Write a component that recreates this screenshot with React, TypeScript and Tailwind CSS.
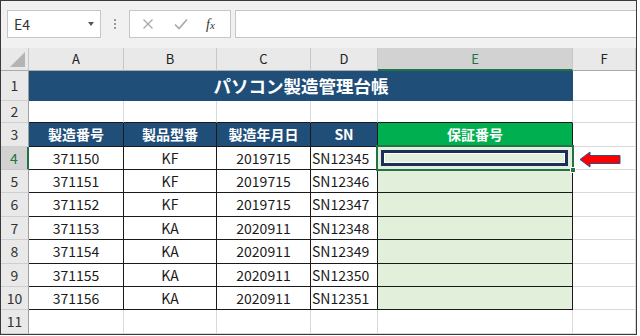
const jp = "font-['Noto_Sans_CJK_JP','Noto_Sans',sans-serif]";

const cols = ["A", "B", "C", "D", "E", "F"];

const rows = [
  ["371150", "KF", "2019715", "SN12345"],
  ["371151", "KF", "2019715", "SN12346"],
  ["371152", "KF", "2019715", "SN12347"],
  ["371153", "KA", "2020911", "SN12348"],
  ["371154", "KA", "2020911", "SN12349"],
  ["371155", "KA", "2020911", "SN12350"],
  ["371156", "KA", "2020911", "SN12351"],
];

function RowHead({ n, active }: { n: number; active?: boolean }) {
  return (
    <div
      className={
        active
          ? "flex items-center justify-center border-b border-r-2 border-b-[#c8c8c8] border-r-[#217346] bg-[#d2d2d2] text-[14px] text-[#217346]"
          : "flex items-center justify-center border-b border-r border-b-[#cfcfcf] border-r-[#9e9e9e] bg-[#e9e9e9] text-[14px] text-[#333]"
      }
    >
      {n}
    </div>
  );
}

function Empty({ bottom }: { bottom?: boolean }) {
  return (
    <div
      className={
        bottom
          ? "border-b border-r border-b-[#1a1a1a] border-r-[#d9d9d9] bg-white"
          : "border-b border-r border-[#d9d9d9] bg-white"
      }
    />
  );
}

function FormulaBar() {
  return (
    <div className="flex h-[47px] items-start gap-0 bg-[#f1f1f1] pl-[6px] pt-[9px]">
      <div className="relative flex h-[28px] w-[94px] items-center border border-[#c6c6c6] bg-white pl-[6px] text-[14px] text-[#333]">
        E4
        <span className="absolute right-[6px] top-[11px] h-0 w-0 border-x-[3.5px] border-t-[4px] border-x-transparent border-t-[#555]" />
      </div>
      <div className="flex h-[28px] w-[28px] flex-col items-center justify-center gap-[2px]">
        <span className="h-[2px] w-[2px] bg-[#9a9a9a]" />
        <span className="h-[2px] w-[2px] bg-[#9a9a9a]" />
        <span className="h-[2px] w-[2px] bg-[#9a9a9a]" />
      </div>
      <div className="flex h-[28px] w-[102px] items-center border border-[#c6c6c6] bg-white">
        <svg width="12" height="12" viewBox="0 0 12 12" className="ml-[12px]">
          <path d="M1.5 1.5 L10.5 10.5 M10.5 1.5 L1.5 10.5" stroke="#a8a8a8" strokeWidth="1.3" fill="none" />
        </svg>
        <svg width="14" height="12" viewBox="0 0 14 12" className="ml-[20px]">
          <path d="M1 6.5 L5 10.5 L13 1.5" stroke="#a8a8a8" strokeWidth="1.6" fill="none" />
        </svg>
        <span className="ml-[18px] font-['Liberation_Serif',serif] text-[14px] italic text-[#333]">
          f<span className="text-[11px]">x</span>
        </span>
      </div>
      <div className="ml-[4px] h-[28px] flex-1 border border-r-0 border-[#c6c6c6] bg-white" />
    </div>
  );
}

export default function App() {
  return (
    <div className={`h-[336px] w-[640px] bg-white ${jp}`}>
      <div className="h-[335px] w-[637px] overflow-hidden border border-[#3a3a3a]">
        <FormulaBar />
        <div className="grid grid-cols-[28px_95px_93px_94px_67px_195px_1fr] grid-rows-[23px_30px_22px_24px_23px_23px_24px_23px_24px_23px_23px_24px]">
          {/* column headers */}
          <div className="relative border-b border-r border-b-[#ababab] border-r-[#c8c8c8] bg-[#e9e9e9]">
            <span className="absolute bottom-[3px] right-[3px] h-0 w-0 border-b-[15px] border-l-[15px] border-b-[#b4b4b4] border-l-transparent" />
          </div>
          {cols.map((c) =>
            c === "E" ? (
              <div
                key={c}
                className="flex items-center justify-center border-b-2 border-r border-b-[#217346] border-r-[#c8c8c8] bg-[#d2d2d2] text-[13px] text-[#217346]"
              >
                {c}
              </div>
            ) : (
              <div
                key={c}
                className="flex items-center justify-center border-b border-r border-b-[#ababab] border-r-[#c8c8c8] bg-[#e9e9e9] text-[13px] text-[#222]"
              >
                {c}
              </div>
            )
          )}

          {/* row 1 */}
          <RowHead n={1} />
          <div className="col-span-5 flex items-center justify-center bg-[#1f4e79] text-[17.5px] font-bold text-white">
            パソコン製造管理台帳
          </div>
          <Empty />

          {/* row 2 */}
          <RowHead n={2} />
          <Empty bottom />
          <Empty bottom />
          <Empty bottom />
          <Empty bottom />
          <Empty bottom />
          <Empty />

          {/* row 3 */}
          <RowHead n={3} />
          {["製造番号", "製品型番", "製造年月日", "SN"].map((h) => (
            <div
              key={h}
              className="flex items-center justify-center border-b border-r border-[#1a1a1a] bg-[#1f4e79] text-[14px] font-bold text-white"
            >
              {h}
            </div>
          ))}
          <div className="flex items-center justify-center border-b border-r border-[#1a1a1a] bg-[#00b050] text-[14px] font-bold text-white">
            保証番号
          </div>
          <Empty />

          {/* data rows */}
          {rows.map((r, i) => (
            <div key={r[0]} className="contents">
              <RowHead n={i + 4} active={i === 0} />
              <div className="flex items-center justify-center border-b border-r border-[#1a1a1a] bg-white text-[14px] text-[#1a1a1a]">
                {r[0]}
              </div>
              <div className="flex items-center justify-center border-b border-r border-[#1a1a1a] bg-white text-[14px] text-[#1a1a1a]">
                {r[1]}
              </div>
              <div className="flex items-center justify-center border-b border-r border-[#1a1a1a] bg-white text-[14px] text-[#1a1a1a]">
                {r[2]}
              </div>
              <div className="flex items-center overflow-hidden whitespace-nowrap border-b border-r border-[#1a1a1a] bg-white pl-[1px] text-[14px] text-[#1a1a1a]">
                {r[3]}
              </div>
              <div className="relative border-b border-r border-[#1a1a1a] bg-[#e2efda]">
                {i === 0 && (
                  <>
                    <div className="absolute -left-[2px] -top-[2px] bottom-[-2px] right-[-2px] z-10 border-2 border-[#217346]" />
                    <div className="absolute bottom-[-4px] right-[-4px] z-20 h-[6px] w-[6px] border border-white bg-[#217346]" />
                    <div className="absolute bottom-[3px] left-[3px] right-[4px] top-[3px] z-10 border-[3px] border-[#1c2f5c] shadow-[inset_0_0_0_1px_#ffffff]" />
                  </>
                )}
              </div>
              <div className="relative border-b border-r border-[#d9d9d9] bg-white">
                {i === 0 && (
                  <svg width="42" height="17" viewBox="0 0 42 17" className="absolute left-[6px] top-[4px]">
                    <path
                      d="M1 8.5 L11 1 L11 4.5 L41 4.5 L41 12.5 L11 12.5 L11 16 Z"
                      fill="#ff0000"
                      stroke="#2f4f8f"
                      strokeWidth="1"
                    />
                  </svg>
                )}
              </div>
            </div>
          ))}

          {/* row 11 */}
          <RowHead n={11} />
          <Empty />
          <Empty />
          <Empty />
          <Empty />
          <Empty />
          <Empty />
        </div>
      </div>
    </div>
  );
}
